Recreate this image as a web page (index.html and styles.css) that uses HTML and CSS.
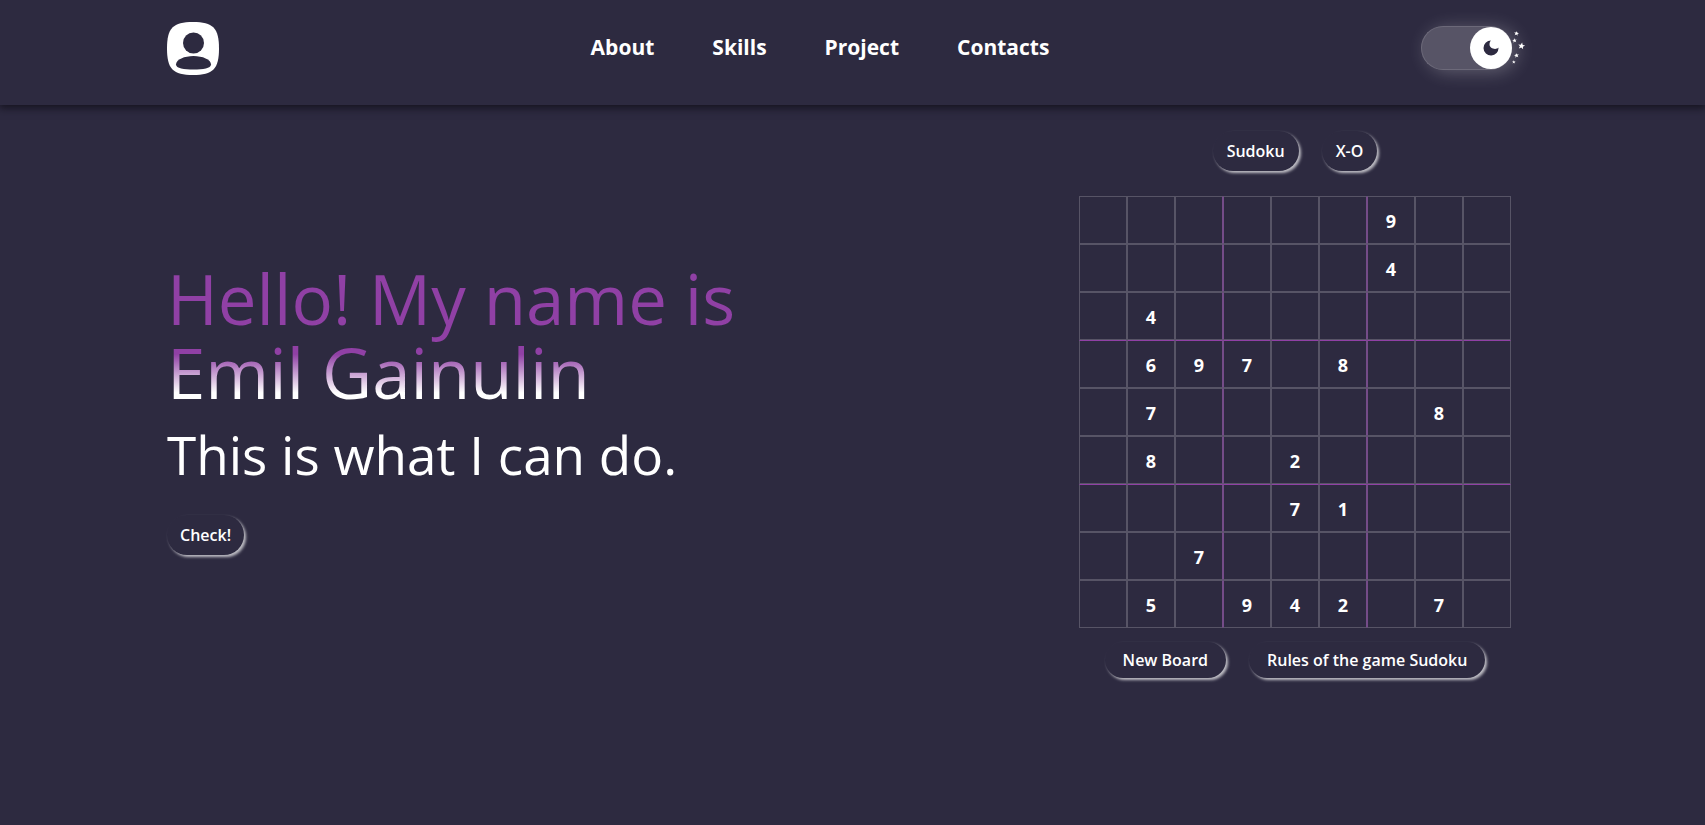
FILE: index.html
```html
<!DOCTYPE html>
<html lang="en">
<head>
<meta charset="utf-8">
<title>Emil Gainulin</title>
<link rel="stylesheet" href="styles.css">
</head>
<body>
<header class="header">
  <a class="logo" href="#" aria-label="Home">
    <svg viewBox="0 0 52 53" width="52" height="53"><path fill="#fff" d="M26 0C46 0 52 6 52 26.500S46 53 26 53 0 47 0 26.500 6 0 26 0Z"/><circle cx="26.500" cy="21" r="10.500" fill="#2d2a40"/><path fill="#2d2a40" d="M26.500 34c9 0 17.500 3.500 17.500 8.500 0 4-8 5-17.500 5S9 46.500 9 42.500c0-5 8.500-8.500 17.500-8.500Z"/></svg>
  </a>
  <nav class="nav">
    <a href="#about">About</a>
    <a href="#skills">Skills</a>
    <a href="#project">Project</a>
    <a href="#contacts">Contacts</a>
  </nav>
  <button class="toggle" type="button" aria-label="Toggle theme">
    <span class="knob"><svg viewBox="0 0 16 16" width="16" height="16"><path fill="#2d2a40" d="M8 0.500A7.500 7.500 0 1 0 15.500 7.500C13 10.500 6.500 8.500 6.500 4.500 6.500 2.500 7 1.500 8 .5Z"/></svg></span>
    <svg class="stars" viewBox="0 0 14 40" width="14" height="40"><defs><path id="s" d="M0-3 .9-1 3-.9 1.300.5 1.900 2.600 0 1.400-1.900 2.600-1.300.5-3-.9-.9-1Z"/></defs><g fill="#fff"><use href="#s" transform="translate(4.500 6.500) rotate(10) scale(.8)"/><use href="#s" transform="translate(2.500 13.500) rotate(-10) scale(.75)"/><use href="#s" transform="translate(9.500 19) rotate(10) scale(1.150)"/><use href="#s" transform="translate(4.500 28.500) rotate(-10) scale(.8)"/><use href="#s" transform="translate(1.800 35) scale(.6)"/></g></svg>
  </button>
</header>
<main class="main">
  <section class="intro">
    <h1 class="title">Hello! My name is<br>Emil Gainulin</h1>
    <p class="subtitle">This is what I can do.</p>
    <button class="btn" type="button">Check!</button>
  </section>
  <section class="game">
    <div class="row"><button class="btn" type="button">Sudoku</button><button class="btn" type="button">X-O</button></div>
    <table class="board">
      <tr><td></td><td></td><td></td><td></td><td></td><td></td><td>9</td><td></td><td></td></tr>
      <tr><td></td><td></td><td></td><td></td><td></td><td></td><td>4</td><td></td><td></td></tr>
      <tr><td></td><td>4</td><td></td><td></td><td></td><td></td><td></td><td></td><td></td></tr>
      <tr><td></td><td>6</td><td>9</td><td>7</td><td></td><td>8</td><td></td><td></td><td></td></tr>
      <tr><td></td><td>7</td><td></td><td></td><td></td><td></td><td></td><td>8</td><td></td></tr>
      <tr><td></td><td>8</td><td></td><td></td><td>2</td><td></td><td></td><td></td><td></td></tr>
      <tr><td></td><td></td><td></td><td></td><td>7</td><td>1</td><td></td><td></td><td></td></tr>
      <tr><td></td><td></td><td>7</td><td></td><td></td><td></td><td></td><td></td><td></td></tr>
      <tr><td></td><td>5</td><td></td><td>9</td><td>4</td><td>2</td><td></td><td>7</td><td></td></tr>
    </table>
    <div class="row"><button class="btn wide" type="button">New Board</button><button class="btn wide" type="button">Rules of the game Sudoku</button></div>
  </section>
</main>
</body>
</html>
```
FILE: styles.css
```css
* { box-sizing: border-box; }
body {
  margin: 0;
  min-height: 100vh;
  background: #2d2a40;
  color: #fff;
  font-family: "Open Sans", "Noto Sans", sans-serif;
}
.header {
  display: flex;
  justify-content: space-between;
  align-items: flex-start;
  padding: 22px 193px 30px 167px;
  box-shadow: 0 2px 8px 1px #15131f;
}
.logo { display: block; }
.logo svg { display: block; }
.nav { display: flex; gap: 58px; padding-top: 9px; }
.nav a {
  color: #fff;
  font-size: 21px;
  line-height: 32px;
  font-weight: 700;
  text-decoration: none;
}
.toggle {
  position: relative;
  display: flex;
  justify-content: flex-end;
  width: 91px;
  height: 44px;
  margin-top: 4px;
  padding: 0;
  border: 1px solid #6c6979;
  border-right: 0;
  border-radius: 22px;
  background: #575466;
  box-shadow: 5px 2px 18px rgba(255, 255, 255, 0.25);
}
.knob {
  display: flex;
  align-items: center;
  justify-content: center;
  width: 42px;
  height: 42px;
  border-radius: 50%;
  background: #fff;
}
.stars { position: absolute; left: 90px; top: 0; }
.main {
  display: flex;
  justify-content: space-between;
  align-items: flex-start;
  padding: 26px 194px 0 167px;
}
.intro { padding-top: 130px; }
.title {
  margin: 0;
  font-size: 69px;
  line-height: 74px;
  font-weight: 400;
  color: transparent;
  background: linear-gradient(#9040a5 63%, #fff 89%);
  -webkit-background-clip: text;
  background-clip: text;
}
.subtitle {
  margin: 8px 0 22px;
  font-size: 53px;
  line-height: 76px;
}
.btn {
  height: 40px;
  padding: 0 14px;
  border: 0;
  border-radius: 20px;
  background: #2d2a40;
  color: #fff;
  font: 600 16px/24px "Open Sans", "Noto Sans", sans-serif;
  box-shadow: 2px 2px 3px rgba(255, 255, 255, 0.7);
}
.intro .btn { padding: 0 13px; }
.wide { height: 36px; padding: 0 18px; }
.game { display: flex; flex-direction: column; align-items: center; }
.row { display: flex; gap: 23px; }
.board {
  margin: 25px 0 14px;
  border-collapse: separate;
  border-spacing: 0;
}
.board td {
  width: 48px;
  height: 48px;
  padding: 2px 0 0;
  border: 1px solid #575466;
  text-align: center;
  font-size: 18px;
  line-height: 24px;
  font-weight: 700;
}
.board td:nth-child(3), .board td:nth-child(6) { border-right-color: #744c88; }
.board td:nth-child(4), .board td:nth-child(7) { border-left-color: #744c88; }
.board tr:nth-child(4) td, .board tr:nth-child(7) td { border-top-color: #9040a5; }
```
